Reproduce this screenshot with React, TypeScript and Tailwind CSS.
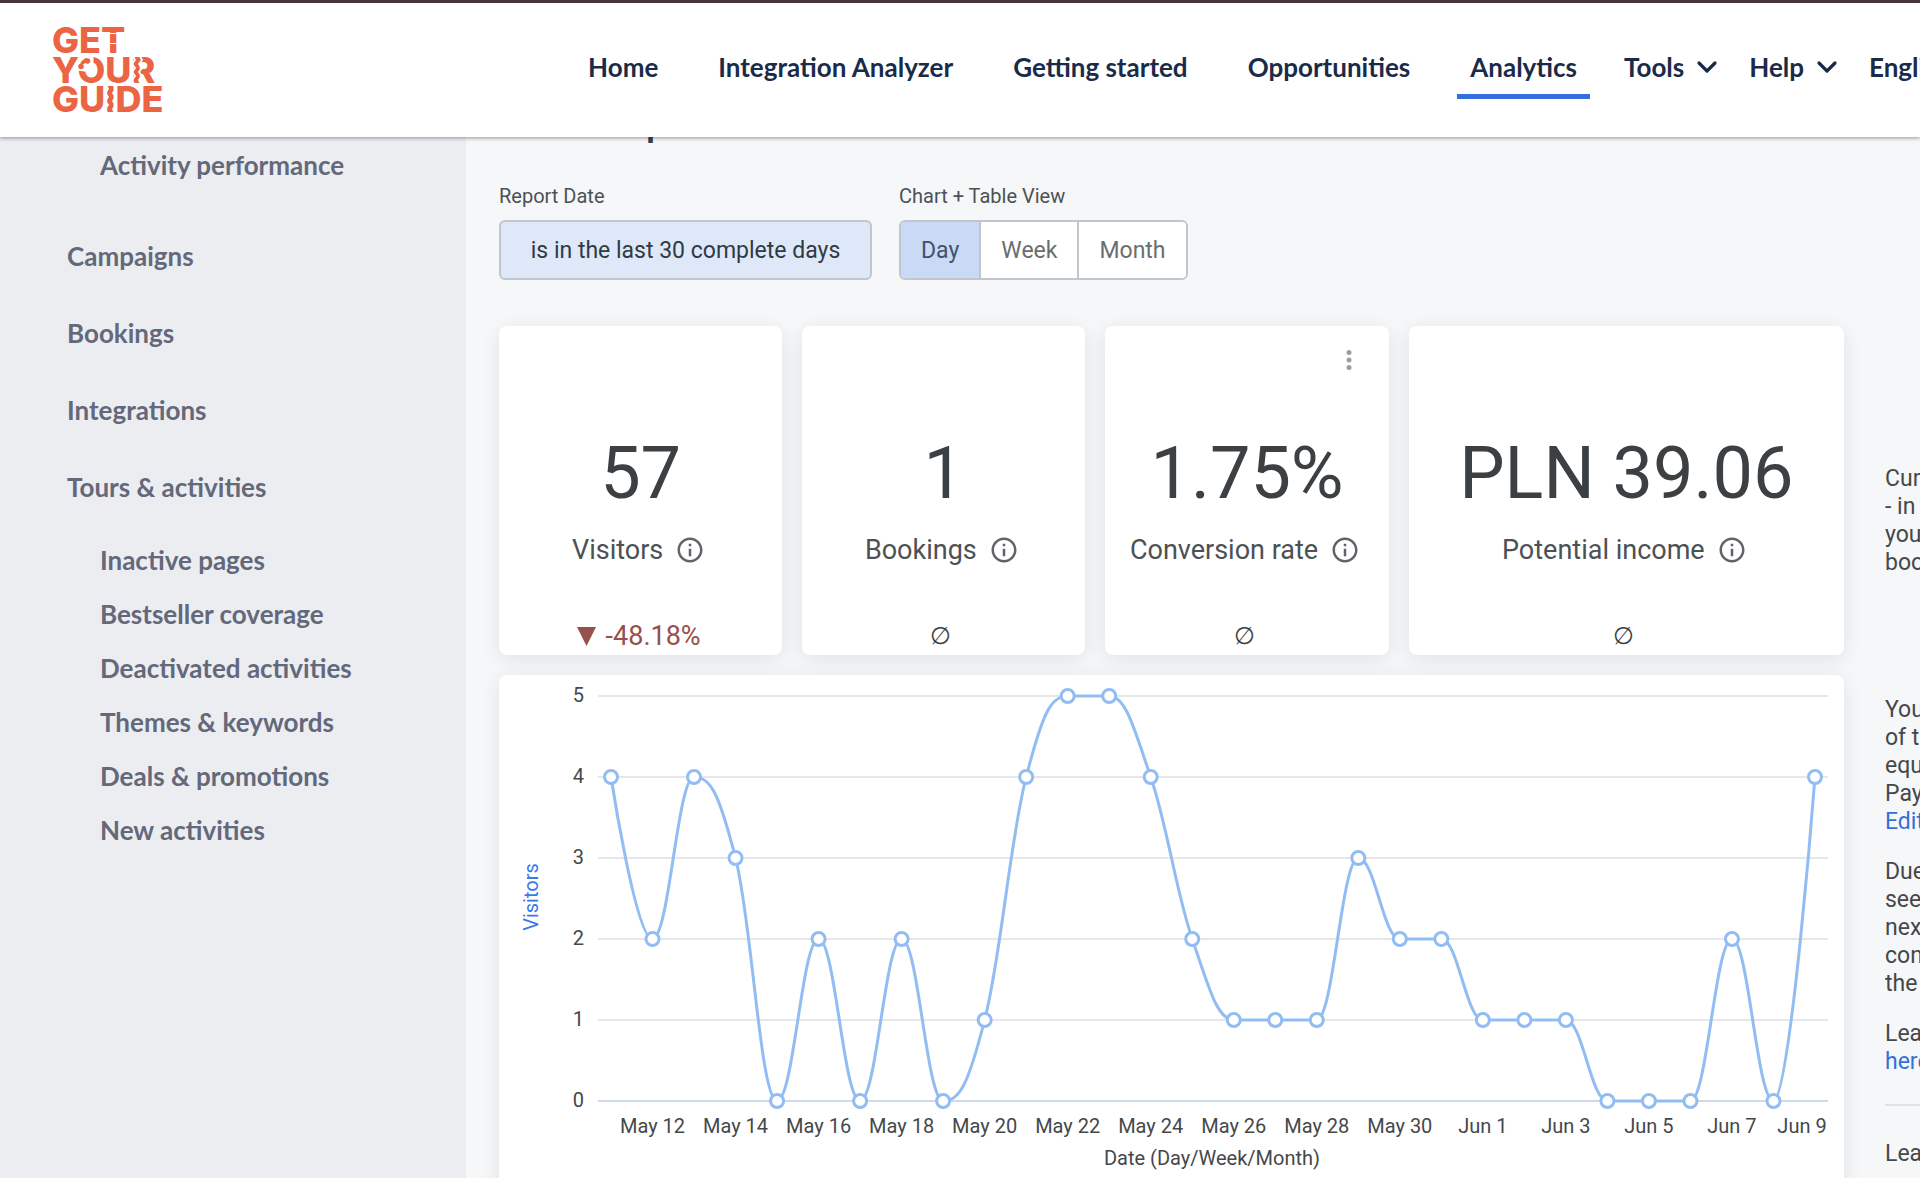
import React from 'react';
import { ChevronDown } from 'lucide-react';
import { MdInfoOutline } from 'react-icons/md';

const navItems = [
  { label: 'Home', active: false },
  { label: 'Integration Analyzer', active: false },
  { label: 'Getting started', active: false },
  { label: 'Opportunities', active: false },
  { label: 'Analytics', active: true },
];

const mainLinks = ['Campaigns', 'Bookings', 'Integrations', 'Tours & activities'];

const tourLinks = [
  'Inactive pages',
  'Bestseller coverage',
  'Deactivated activities',
  'Themes & keywords',
  'Deals & promotions',
  'New activities',
];

interface Stat {
  value: string;
  label: string;
  delta?: string;
  menu?: boolean;
}

const stats: Stat[] = [
  { value: '57', label: 'Visitors', delta: '-48.18%' },
  { value: '1', label: 'Bookings' },
  { value: '1.75%', label: 'Conversion rate', menu: true },
  { value: 'PLN 39.06', label: 'Potential income' },
];

// Daily visitors, May 11 - Jun 9
const visitors = [
  4, 2, 4, 3, 0, 2, 0, 2, 0, 1, 4, 5, 5, 4, 2, 1, 1, 1, 3, 2, 2, 1, 1, 1, 0, 0, 0, 2, 0, 4,
];

const dayLabels = [
  'May 12', 'May 14', 'May 16', 'May 18', 'May 20', 'May 22', 'May 24', 'May 26',
  'May 28', 'May 30', 'Jun 1', 'Jun 3', 'Jun 5', 'Jun 7', 'Jun 9',
];

const pointX = (i: number) => 112 + (i * 1204) / 29;
const pointY = (v: number) => 426 - v * 81;

// Smooth line that never overshoots its neighbours
const buildSpline = (values: number[]) => {
  const pts = values.map((v, i) => ({ x: pointX(i), y: pointY(v) }));
  let d = `M ${pts[0].x} ${pts[0].y}`;
  let prev = pts[0];
  for (let i = 1; i < pts.length; i++) {
    const p = pts[i];
    const last = pts[i - 1];
    const next = pts[i + 1];
    let left = p;
    let right = p;
    if (next) {
      const lx = (1.5 * p.x + last.x) / 2.5;
      const rx = (1.5 * p.x + next.x) / 2.5;
      let ly = (1.5 * p.y + last.y) / 2.5;
      let ry = (1.5 * p.y + next.y) / 2.5;
      const fix = ((ry - ly) * (rx - p.x)) / (rx - lx) + p.y - ry;
      ly += fix;
      ry += fix;
      if (ly > last.y && ly > p.y) {
        ly = Math.max(last.y, p.y);
        ry = 2 * p.y - ly;
      } else if (ly < last.y && ly < p.y) {
        ly = Math.min(last.y, p.y);
        ry = 2 * p.y - ly;
      }
      if (ry > next.y && ry > p.y) {
        ry = Math.max(next.y, p.y);
        ly = 2 * p.y - ry;
      } else if (ry < next.y && ry < p.y) {
        ry = Math.min(next.y, p.y);
        ly = 2 * p.y - ry;
      }
      left = { x: lx, y: ly };
      right = { x: rx, y: ry };
    }
    d += ` C ${prev.x} ${prev.y} ${left.x} ${left.y} ${p.x} ${p.y}`;
    prev = right;
  }
  return d;
};

const Logo = () => (
  <svg width="112" height="90" viewBox="0 0 112 90" role="img" aria-label="GetYourGuide">
    <g fill="#eb6444" fontFamily="Inter, sans-serif" fontWeight={800} fontSize={36}>
      <text x="0" y="28">GET</text>
      <text x="0" y="58">YOUR</text>
      <text x="0" y="87">GUIDE</text>
    </g>
    {/* Cuts through the T, open corner of the O, wavy R and I */}
    <g fill="none" stroke="#fff">
      <path d="M56 8.5H67M56 18.5H67" strokeWidth="1.2" />
      <path d="M26 42L33 43L38 38L38 30" strokeWidth="7" />
      <path d="M88 31l2 4-3 4 3 4-3 4 3 4-3 4 2 4" strokeWidth="1.8" />
      <path d="M81 31l2 4-3 4 3 4-3 4 3 4-3 4 2 4" strokeWidth="1.8" />
      <path d="M54 60l2 4-3 4 3 4-3 4 3 4-3 4 2 4" strokeWidth="1.8" />
      <path d="M62 60l2 4-3 4 3 4-3 4 3 4-3 4 2 4" strokeWidth="1.8" />
    </g>
    <g fill="#eb6444">
      <circle cx="29" cy="41.5" r="2.8" />
      <circle cx="35.5" cy="36" r="2.8" />
    </g>
  </svg>
);

const Header = () => (
  <header className="relative z-10 flex h-[137px] shrink-0 items-center border-t-3 border-[#46353b] bg-white pl-[52px] shadow-[0_1px_4px_rgba(0,0,0,0.4)]">
    <a href="#home" className="shrink-0">
      <Logo />
    </a>
    <nav className="ml-auto flex shrink-0 items-start whitespace-nowrap text-[26px] leading-8 font-bold text-[#1a2b49]">
      <div className="flex gap-[34px]">
        {navItems.map((item) => (
          <a
            key={item.label}
            href="#nav"
            className={`border-b-5 px-[13px] pt-[9px] pb-[11px] ${
              item.active ? 'border-[#346fdd]' : 'border-transparent'
            }`}
          >
            {item.label}
          </a>
        ))}
      </div>
      <div className="flex gap-[26px] pt-[9px] pl-[34px]">
        {['Tools', 'Help'].map((label) => (
          <button key={label} className="flex items-center gap-[7px]">
            {label}
            <ChevronDown size={32} strokeWidth={2.4} />
          </button>
        ))}
        <button className="w-[51px] overflow-hidden text-left">English</button>
      </div>
    </nav>
  </header>
);

const Sidebar = () => (
  <aside className="w-[466px] shrink-0 bg-[#ebedf1] pt-3 pl-[67px] text-[26px] leading-8 font-bold text-[#63687a]">
    <a href="#performance" className="ml-[33px] block">
      Activity performance
    </a>
    <nav className="mt-[59px] flex flex-col gap-[45px]">
      {mainLinks.map((label) => (
        <a key={label} href="#link">
          {label}
        </a>
      ))}
    </nav>
    <nav className="mt-[41px] ml-[33px] flex flex-col gap-[22px]">
      {tourLinks.map((label) => (
        <a key={label} href="#link">
          {label}
        </a>
      ))}
    </nav>
  </aside>
);

const Filters = () => (
  <div className="flex gap-[27px]">
    <div>
      <p id="report-date" className="text-xl leading-6 text-[#4c5154]">
        Report Date
      </p>
      <button
        aria-labelledby="report-date"
        className="mt-3 h-[60px] w-[373px] rounded-md border-2 border-[#c1c6cc] bg-[#dee8f8] pt-0.5 text-[23px] text-[#2f3a45]"
      >
        is in the last 30 complete days
      </button>
    </div>
    <div>
      <p className="text-xl leading-6 text-[#4c5154]">Chart + Table View</p>
      <div className="mt-3 flex h-[60px] overflow-hidden rounded-md border-2 border-[#c1c6cc] text-[23px]">
        <button className="bg-[#c9daf7] px-5 pt-0.5 text-[#43516b]">Day</button>
        <button className="border-x-2 border-[#c1c6cc] bg-white px-5 pt-0.5 text-[#6a6e71]">Week</button>
        <button className="bg-white px-5 pt-0.5 text-[#6a6e71]">Month</button>
      </div>
    </div>
  </div>
);

const StatCard: React.FC<{ stat: Stat }> = ({ stat }) => (
  <section className="relative flex flex-col items-center rounded-lg bg-white pt-[104px] pb-[3px] shadow-[0_4px_20px_rgba(0,0,0,0.09)]">
    {stat.menu && (
      <button aria-label="More options" className="absolute top-6 right-9 text-[#9b9d9f]">
        <svg width="8" height="20" viewBox="0 0 8 20" fill="currentColor">
          <circle cx="4" cy="2.5" r="2.5" />
          <circle cx="4" cy="10" r="2.5" />
          <circle cx="4" cy="17.5" r="2.5" />
        </svg>
      </button>
    )}
    <p className="text-7xl leading-[88px] whitespace-nowrap text-[#3c4043]">{stat.value}</p>
    <p className="mt-4 flex items-center gap-3 pr-1 text-[27px] leading-8 whitespace-nowrap text-[#4c5154]">
      {stat.label}
      <MdInfoOutline size={30} className="text-[#606468]" />
    </p>
    {stat.delta ? (
      <p className="mt-[54px] flex items-center gap-2.5 pr-1 text-[27px] leading-8 text-[#96504d]">
        <svg width="19" height="19" viewBox="0 0 19 19" fill="currentColor">
          <path d="M0 0H19L9.5 19Z" />
        </svg>
        {stat.delta}
      </p>
    ) : (
      <p className="mt-[54px] pr-1.5 text-2xl leading-8 text-[#3c4043]">∅</p>
    )}
  </section>
);

const VisitorsChart = () => (
  <section className="mt-5 rounded-lg bg-white shadow-[0_4px_20px_rgba(0,0,0,0.09)]">
    <svg
      viewBox="0 0 1345 530"
      className="block w-full"
      fontFamily="Roboto, sans-serif"
      fontSize={20}
      fill="#45484b"
    >
      {[0, 1, 2, 3, 4, 5].map((v) => (
        <g key={v}>
          <path d={`M99 ${pointY(v)}H1329`} stroke={v === 0 ? '#d0d8ec' : '#e6e7e8'} strokeWidth={2} />
          <text x="85" y={pointY(v) + 6} textAnchor="end">
            {v}
          </text>
        </g>
      ))}
      <path d={buildSpline(visitors)} fill="none" stroke="#92bdf3" strokeWidth={3} />
      {visitors.map((v, i) => (
        <circle key={i} cx={pointX(i)} cy={pointY(v)} r={6.5} fill="#fff" stroke="#92bdf3" strokeWidth={3} />
      ))}
      {dayLabels.map((label, i) => (
        <text key={label} x={i === 14 ? 1303 : pointX(i * 2 + 1)} y="458" textAnchor="middle">
          {label}
        </text>
      ))}
      <text x="713" y="490" textAnchor="middle">
        Date (Day/Week/Month)
      </text>
      <text transform="translate(39 222) rotate(-90)" textAnchor="middle" fill="#3a78e7">
        Visitors
      </text>
    </svg>
  </section>
);

const Notes = () => (
  <aside className="mt-[328px] w-[35px] shrink-0 overflow-hidden text-[23px] leading-7 whitespace-nowrap text-[#45484b]">
    <p>
      Curr
      <br />- in
      <br />
      your
      <br />
      book
    </p>
    <p className="mt-[119px]">
      Your
      <br />
      of the
      <br />
      equal
      <br />
      Pay
      <br />
      <a href="#edit" className="text-[#346fdd]">
        Edit
      </a>
    </p>
    <p className="mt-[22px]">
      Due
      <br />
      see
      <br />
      next
      <br />
      con
      <br />
      the
    </p>
    <p className="mt-[22px]">
      Learn
      <br />
      <a href="#here" className="text-[#346fdd]">
        here
      </a>
    </p>
    <hr className="mt-[28px] border-t-2 border-[#dfe1e5]" />
    <p className="mt-[34px]">Learn</p>
  </aside>
);

const App = () => (
  <div className="flex h-screen flex-col overflow-hidden bg-[#f6f7f9] font-['Lato',sans-serif]">
    <Header />
    <div className="flex min-h-0 flex-1">
      <Sidebar />
      <div className="flex min-w-0 flex-1 gap-[41px] pl-[33px] font-['Roboto',sans-serif]">
        <main className="min-w-0 flex-1">
          <h1 className="-mt-[31px] text-[32px] leading-10 font-bold text-[#3c4043]">Visitors report</h1>
          <div className="mt-[38px]">
            <Filters />
          </div>
          <div className="mt-[46px] grid grid-cols-[283fr_283fr_283fr_435fr] gap-5">
            {stats.map((stat) => (
              <StatCard key={stat.label} stat={stat} />
            ))}
          </div>
          <VisitorsChart />
        </main>
        <Notes />
      </div>
    </div>
  </div>
);

export default App;
